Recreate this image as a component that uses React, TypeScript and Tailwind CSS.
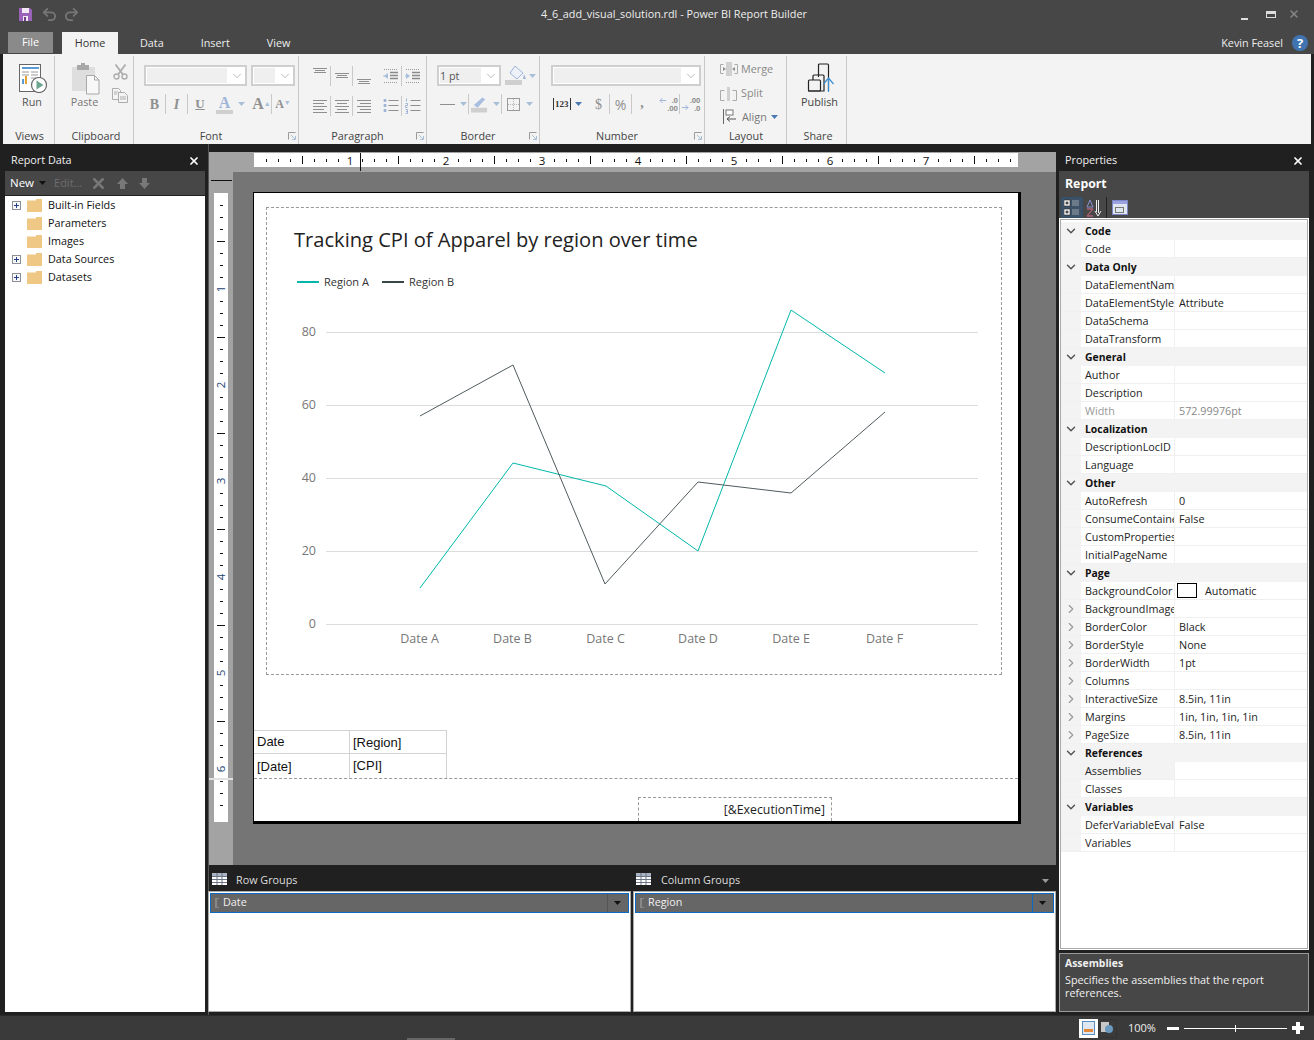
import type { ReactNode } from "react";
import { ChevronDown, ChevronRight, X, Undo2, Redo2 } from "lucide-react";

const ui = "font-['Open_Sans','Noto_Sans',sans-serif]";

const SaveIcon = () => (
  <svg width="13" height="13" viewBox="0 0 13 13">
    <path d="M0 0h11l2 2v11H0z" fill="#9a62b8" />
    <rect x="3" y="0" width="7" height="5" fill="#f2e9f6" />
    <rect x="4" y="8" width="5" height="5" fill="#f2e9f6" />
    <rect x="5" y="9" width="2" height="4" fill="#6c3f88" />
  </svg>
);

const RunIcon = () => (
  <svg width="30" height="30" viewBox="0 0 30 30">
    <rect x="1.5" y="1.5" width="21" height="27" fill="#fff" stroke="#666" />
    <path d="M4 5h17" stroke="#5b9bd5" strokeWidth="2" />
    <path d="M4 9h7M4 12h7M13 9h7M13 12h7M13 15h7" stroke="#9a9a9a" />
    <rect x="4" y="16" width="2" height="5" fill="#5b9bd5" />
    <rect x="7" y="13" width="2" height="8" fill="#e3a33b" />
    <circle cx="21" cy="22" r="7.5" fill="#fff" stroke="#666" strokeWidth="1.2" />
    <path d="M18.5 17.5l7 4.5-7 4.5z" fill="#6aa58c" />
  </svg>
);

const PasteIcon = () => (
  <svg width="30" height="32" viewBox="0 0 30 32">
    <rect x="1" y="4" width="23" height="24" rx="1" fill="#dedede" />
    <rect x="6" y="2" width="12" height="5" fill="#a8a8a8" />
    <rect x="10" y="0" width="4" height="3" fill="#a8a8a8" />
    <path d="M15.5 12.5h8l4.5 4.5v14h-12.500z" fill="#f8f8f8" stroke="#a8a8a8" />
    <path d="M23.500 12.500v4.500h4.500" fill="none" stroke="#a8a8a8" />
  </svg>
);

const ScissorsIcon = () => (
  <svg width="15" height="16" viewBox="0 0 15 16" fill="none" stroke="#adadad" strokeWidth="1.4">
    <circle cx="3.500" cy="12.500" r="2.500" />
    <circle cx="11.500" cy="12.500" r="2.500" />
    <path d="M2.500 0.500l7.500 10M12.500 0.500l-7.500 10" strokeWidth="1.800" />
  </svg>
);

const CopyIcon = () => (
  <svg width="16" height="15" viewBox="0 0 16 15" fill="#f4f4f4" stroke="#adadad">
    <path d="M0.500 0.500h6l2 2v9h-8z" />
    <path d="M6.500 4.500h6l3 3v7h-9z" />
    <path d="M2 4h4M2 6h3M8 9h6M8 11h6" />
  </svg>
);

// stacked text lines, used for the paragraph alignment icons
const Lines = ({ rows, color = "#8f8f8f" }: { rows: [number, number, number][]; color?: string }) => (
  <svg width="16" height="20" viewBox="0 0 16 20" stroke={color} strokeWidth="1">
    {rows.map(([a, b, y], i) => (
      <path key={i} d={`M${a} ${y + 0.5}H${b}`} />
    ))}
  </svg>
);

const IndentIcon = ({ right }: { right?: boolean }) => (
  <svg width="16" height="20" viewBox="0 0 16 20" strokeWidth="1">
    <path d="M1 3.500h14M1 16.500h14" stroke="#9a9a9a" strokeDasharray="1 1" />
    <path d="M7 6.500h8M7 9.500h8M7 12.500h8" stroke="#8a8a8a" strokeWidth="1.400" />
    <path d={right ? "M1 7l4 3-4 3z" : "M5 7l-4 3 4 3z"} fill="#a9bfe0" stroke="none" />
    <path d="M0 10h4" stroke="#a9bfe0" />
  </svg>
);

const BulletIcon = ({ numbered }: { numbered?: boolean }) => (
  <svg width="16" height="16" viewBox="0 0 16 16">
    <path d="M5.500 2.500h10M5.500 7.500h10M5.500 12.500h10" stroke="#8f8f8f" />
    {numbered ? (
      <path d="M1.500 0.500v3M0.500 5.500h2v2h-2v2h2M0.500 11.500h2v4h-2M1 13.500h1" stroke="#9fb5d8" fill="none" />
    ) : (
      <path d="M1 1.500h2v2H1zM1 6.500h2v2H1zM1 11.500h2v2H1z" fill="#9fb5d8" stroke="#9fb5d8" />
    )}
  </svg>
);

const Caret = ({ color = "#a9bfd8" }: { color?: string }) => (
  <svg width="8" height="4" viewBox="0 0 8 4" className="shrink-0">
    <path d="M0 0h7L3.500 4z" fill={color} />
  </svg>
);

const Launcher = () => (
  <svg width="8" height="8" viewBox="0 0 8 8" className="absolute right-[2px] bottom-[4px]" fill="none">
    <path d="M0.500 7.500v-7h7" stroke="#9a9a9a" />
    <path d="M3 3l4 4M4 7.500h3.500V4" stroke="#a9bfd8" />
  </svg>
);

const Group = ({ w, label, launcher, labelPad = "", children }: { w: string; label: string; launcher?: boolean; labelPad?: string; children?: ReactNode }) => (
  <div className={`${w} h-[88px] mt-[2px] border-r border-[#c9c9c9] flex flex-col relative`}>
    <div className="flex-1">{children}</div>
    <div className={`h-[15px] mb-[1px] text-center text-[10.800px] leading-[15px] text-[#444] ${launcher ? "pr-[10px]" : ""} ${labelPad}`}>{label}</div>
    {launcher && <Launcher />}
  </div>
);

const Combo = ({ w, fill, text }: { w: string; fill: string; text?: string }) => (
  <div className={`${w} h-[21px] border-2 border-[#cfcfcf] bg-white flex items-center pl-[1px] shrink-0`}>
    <div className={`${fill} h-[15px] bg-[#efefef] text-[10.800px] leading-[15px] text-[#555]`}>{text}</div>
    <ChevronDown size={14} strokeWidth={1} color="#8a8a8a" className="ml-auto mr-[1px]" />
  </div>
);

const Cell = ({ w = "w-[22px]", sep, children }: { w?: string; sep?: boolean; children: ReactNode }) => (
  <div className={`${w} h-[20px] flex items-center justify-center shrink-0 ${sep ? "border-r border-[#c9c9c9]" : ""}`}>{children}</div>
);

const Decimal = ({ top, bottom, right }: { top: string; bottom: string; right?: boolean }) => (
  <div className="flex items-center gap-[1px]">
    <svg width="7" height="7" viewBox="0 0 7 7" className={right ? "mt-[7px]" : "-mt-[7px]"}>
      <path d="M7 3.500H1M3.500 1L1 3.500 3.500 6" fill="none" stroke="#9fb5d8" transform={right ? "rotate(180 3.500 3.500)" : undefined} />
    </svg>
    <span className="text-[7.500px] leading-[8px] font-bold text-right">{top}<br />{bottom}</span>
  </div>
);

const Ribbon = () => (
  <div className={`mx-[3px] h-[90px] bg-[#f3f3f3] flex shrink-0 ${ui}`}>
    <Group w="w-[52px]" label="Views" labelPad="pl-[2px]">
      <div className="flex flex-col items-center pt-[7px] pl-[9px]">
        <RunIcon />
        <span className="text-[10.800px] leading-[15px] text-[#555] -ml-[2px] mt-[1px]">Run</span>
      </div>
    </Group>
    <Group w="w-[79px]" label="Clipboard" labelPad="pl-[4px]">
      <div className="flex pl-[16px] pt-[7px]">
        <div className="flex flex-col items-center">
          <PasteIcon />
          <span className="text-[10.800px] leading-[15px] text-[#777] -mt-[1px] -ml-[3px]">Paste</span>
        </div>
        <div className="flex flex-col items-center ml-[11px] gap-[8px] pt-[1px]">
          <ScissorsIcon />
          <CopyIcon />
        </div>
      </div>
    </Group>
    <Group w="w-[165px]" label="Font" launcher>
      <div className="pl-[10px] pt-[9px]">
        <div className="flex gap-[4px]">
          <Combo w="w-[103px]" fill="w-[80px]" />
          <Combo w="w-[44px]" fill="w-[21px]" />
        </div>
        <div className="flex items-center mt-[8px] text-[#8f8f8f]">
          <Cell sep><span className="font-['Liberation_Serif',serif] font-bold text-[14px]">B</span></Cell>
          <Cell sep><span className="font-['Liberation_Serif',serif] italic font-bold text-[14px]">I</span></Cell>
          <Cell w="w-[24px]"><span className="font-['Liberation_Serif',serif] font-bold text-[13px] underline">U</span></Cell>
          <div className="w-[32px] h-[20px] flex items-center gap-[5px] pl-[4px]">
            <div className="flex flex-col items-center w-[17px]">
              <span className="font-['Liberation_Serif',serif] font-bold text-[16px] leading-[15px] text-[#9fb5d8]">A</span>
              <div className="w-[17px] h-[4px] bg-[#cfcfcf]" />
            </div>
            <Caret />
          </div>
          <Cell w="w-[28px]" sep><span className="font-['Liberation_Serif',serif] font-bold text-[16px] ml-[8px]">A<sup className="text-[#a9bfd8] text-[7px]">▲</sup></span></Cell>
          <Cell><span className="font-['Liberation_Serif',serif] font-bold text-[12px]">A<sup className="text-[#a9bfd8] text-[7px]">▼</sup></span></Cell>
        </div>
      </div>
    </Group>
    <Group w="w-[128px]" label="Paragraph" launcher>
      <div className="pl-[10px] pt-[9px]">
        <div className="flex items-center h-[22px]">
          <Cell sep><Lines rows={[[1, 15, 2], [3, 13, 4], [2, 14, 6]]} /></Cell>
          <Cell sep><Lines rows={[[1, 15, 7], [3, 13, 9], [2, 14, 11]]} /></Cell>
          <Cell><Lines rows={[[1, 15, 13], [3, 13, 15], [2, 14, 17]]} /></Cell>
          <div className="w-[5px]" />
          <Cell sep><IndentIcon /></Cell>
          <Cell><IndentIcon right /></Cell>
        </div>
        <div className="flex items-center mt-[9px]">
          <Cell sep><Lines rows={[[1, 15, 4], [1, 12, 7], [1, 15, 10], [1, 12, 13], [1, 15, 16]]} /></Cell>
          <Cell sep><Lines rows={[[1, 15, 4], [3, 13, 7], [1, 15, 10], [3, 13, 13], [1, 15, 16]]} /></Cell>
          <Cell><Lines rows={[[1, 15, 4], [4, 15, 7], [1, 15, 10], [4, 15, 13], [1, 15, 16]]} /></Cell>
          <div className="w-[5px]" />
          <Cell sep><BulletIcon /></Cell>
          <Cell><BulletIcon numbered /></Cell>
        </div>
      </div>
    </Group>
    <Group w="w-[113px]" label="Border" launcher>
      <div className="pl-[10px] pt-[9px]">
        <div className="flex items-center">
          <Combo w="w-[64px]" fill="w-[41px]" text="1 pt" />
          <svg width="24" height="21" viewBox="0 0 24 21" className="ml-[4px]">
            <path d="M10 1l8 7-6 6-7-6z" fill="#eef2f8" stroke="#9fb5d8" />
            <path d="M19 9l2 5h-3z" fill="#9fb5d8" />
            <rect x="0" y="15" width="17" height="5" fill="#cfcfcf" />
          </svg>
          <Caret />
        </div>
        <div className="flex items-center mt-[8px]">
          <div className="w-[32px] h-[20px] flex items-center gap-[5px] border-r border-[#c9c9c9] shrink-0 pl-[3px]">
            <div className="w-[15px] h-[1px] bg-[#8f8f8f]" />
            <Caret />
          </div>
          <div className="w-[33px] h-[20px] flex items-center gap-[5px] border-r border-[#c9c9c9] shrink-0 pl-[2px]">
            <svg width="18" height="18" viewBox="0 0 18 18">
              <path d="M3 10l9-8 3 2-8 9z" fill="#a9bfe0" />
              <rect x="0" y="13" width="17" height="5" fill="#cfcfcf" />
            </svg>
            <Caret />
          </div>
          <div className="flex items-center gap-[6px] pl-[5px]">
            <svg width="13" height="13" viewBox="0 0 13 13" fill="none" stroke="#9a9a9a">
              <rect x="0.500" y="0.500" width="12" height="12" />
              <path d="M6.500 1v11M1 6.500h11" strokeDasharray="1 1" stroke="#b5b5b5" />
            </svg>
            <Caret />
          </div>
        </div>
      </div>
    </Group>
    <Group w="w-[165px]" label="Number" launcher>
      <div className="pl-[11px] pt-[9px]">
        <Combo w="w-[150px]" fill="w-[127px]" />
        <div className="flex items-center mt-[8px] text-[#8f8f8f]">
          <div className="w-[36px] h-[20px] flex items-center gap-[4px] pl-[2px] shrink-0">
            <span className="border-x border-[#333] text-[#333] font-['Liberation_Serif',serif] font-bold text-[9px] leading-[12px] px-[1px]">123</span>
            <Caret color="#4a78b0" />
          </div>
          <div className="w-[1px] shrink-0" />
          <Cell sep><span className="font-['Liberation_Serif',serif] text-[14px]">$</span></Cell>
          <Cell sep><span className="text-[14px]">%</span></Cell>
          <Cell w="w-[20px]"><span className="font-['Liberation_Serif',serif] font-bold text-[14px] -mt-[4px]">,</span></Cell>
          <div className="w-[6px] shrink-0" />
          <Cell sep><Decimal top=".0" bottom=".00" /></Cell>
          <Cell><Decimal top=".00" bottom=".0" right /></Cell>
        </div>
      </div>
    </Group>
    <Group w="w-[82px]" label="Layout" labelPad="pl-[1px]">
      <div className="flex flex-col pl-[15px] pt-[2px] gap-[3px] text-[10.800px] leading-[21px] text-[#8a8a8a]">
        <div className="flex items-center gap-[3px]">
          <svg width="18" height="14" viewBox="0 0 18 14">
            <rect x="6" y="0" width="6" height="14" fill="#d0d0d0" />
            <path d="M3.500 2.500h-3v9h3M14.500 2.500h3v9h-3" fill="none" stroke="#aaa" />
            <path d="M3 5l3 2-3 2zM15 5l-3 2 3 2z" fill="#8f8f8f" />
          </svg>
          Merge
        </div>
        <div className="flex items-center gap-[4px]">
          <svg width="17" height="16" viewBox="0 0 17 16">
            <rect x="7" y="2" width="3" height="14" fill="#d0d0d0" />
            <path d="M4.500 5.500h-4v10h4M12.500 5.500h4v10h-4" fill="none" stroke="#aaa" />
          </svg>
          Split
        </div>
        <div className="flex items-center gap-[4px] text-[#777]">
          <svg width="15" height="15" viewBox="0 0 15 15" className="ml-[3px] shrink-0">
            <path d="M0.500 0v15" stroke="#666" />
            <rect x="3" y="1" width="7" height="5" fill="#fff" stroke="#777" />
            <path d="M13 10H4M7 7.500L4 10l3 2.500" fill="none" stroke="#555" />
          </svg>
          Align
          <Caret color="#4a78b0" />
        </div>
      </div>
    </Group>
    <Group w="w-[60px]" label="Share" labelPad="pl-[3px]">
      <div className="flex flex-col items-center pt-[7px] pl-[11px]">
        <svg width="30" height="30" viewBox="0 0 30 30" fill="none">
          <path d="M11.500 14v-12a1 1 0 0 1 1-1h8a1 1 0 0 1 1 1v26" stroke="#222" strokeWidth="1.200" />
          <rect x="1.500" y="17" width="12" height="11" rx="1" stroke="#222" strokeWidth="1.200" />
          <path d="M6 17v-4a1 1 0 0 1 1-1h9a1 1 0 0 1 1 1v15H1" stroke="#222" strokeWidth="1.200" />
          <path d="M21.500 29V15M16.500 21l5-6 5 6" stroke="#3b8ecf" strokeWidth="1.200" />
        </svg>
        <span className="text-[10.800px] leading-[15px] text-[#444] mt-[1px] -ml-[5px]">Publish</span>
      </div>
    </Group>
  </div>
);

const FolderIcon = () => (
  <svg width="15" height="13" viewBox="0 0 15 13">
    <path d="M0 1.500h9V0h6v13H0z" fill="#eec884" />
  </svg>
);

const ReportData = () => (
  <div className={`w-[200px] ml-[5px] flex flex-col shrink-0 ${ui}`}>
    <div className="h-[27px] pt-[6px] flex items-center justify-between pl-[6px] pr-[5px] text-[10.800px] text-[#f0f0f0]">
      Report Data
      <X size={12} strokeWidth={3.500} color="#fff" />
    </div>
    <div className="h-[24px] bg-[#474747] flex items-center pl-[5px] text-[11.500px] text-white">
      New
      <div className="ml-[5px]"><Caret color="#111" /></div>
      <span className="ml-[7px] text-[#6e6e6e] text-[11px]">Edit...</span>
      <X size={17} strokeWidth={3.500} color="#777" className="ml-[8px]" />
      <svg width="11" height="11" viewBox="0 0 11 11" className="ml-[10px]"><path d="M5.500 0L11 6H8v5H3V6H0z" fill="#787878" /></svg>
      <svg width="11" height="11" viewBox="0 0 11 11" className="ml-[11px]"><path d="M5.500 11L11 5H8V0H3v5H0z" fill="#787878" /></svg>
    </div>
    <div className="flex-1 bg-white mb-[3px] mt-[1px] text-[10.800px] text-[#111]">
      {[
        ["Built-in Fields", true],
        ["Parameters", false],
        ["Images", false],
        ["Data Sources", true],
        ["Datasets", true],
      ].map(([name, plus]) => (
        <div key={name as string} className="h-[18px] flex items-center">
          <div className="w-[22px] pl-[7px]">
            {plus && (
              <svg width="9" height="9" viewBox="0 0 9 9">
                <rect x="0.500" y="0.500" width="8" height="8" fill="#f8f8f8" stroke="#8a8f98" />
                <path d="M2 4.500h5M4.500 2v5" stroke="#24408a" />
              </svg>
            )}
          </div>
          <FolderIcon />
          <span className="ml-[6px]">{name as string}</span>
        </div>
      ))}
    </div>
  </div>
);

const hTicks = Array.from({ length: 64 }, (_, i) => i);

const TopRuler = () => (
  <svg width="847" height="20" viewBox="209 152 847 20" className="block shrink-0">
    <rect x="209" y="152" width="847" height="20" fill="#a3a3a3" />
    <rect x="254" y="153" width="764" height="14" fill="#fff" />
    {hTicks.map((i) => {
      const x = 254 + i * 12;
      if (i % 8 === 0) return null;
      const tall = i % 4 === 0;
      return <rect key={i} x={x} y={tall ? 156 : 159} width="1" height={tall ? 8 : 3} fill="#111" />;
    })}
    {[1, 2, 3, 4, 5, 6, 7].map((n) => (
      <text key={n} x={254 + n * 96} y="164.500" textAnchor="middle" fontSize="11.500" fill="#111" fontFamily="Open Sans, sans-serif">{n}</text>
    ))}
    <rect x="360" y="153" width="1" height="18" fill="#111" />
  </svg>
);

const LeftRuler = () => (
  <svg width="24" height="693" viewBox="209 172 24 693" className="block shrink-0">
    <rect x="209" y="172" width="24" height="693" fill="#a3a3a3" />
    <rect x="211" y="180" width="21" height="1" fill="#111" />
    <rect x="214" y="193" width="14" height="629" fill="#fff" />
    {Array.from({ length: 52 }, (_, i) => i).map((i) => {
      const y = 193 + i * 12;
      if (i === 0 || i % 8 === 0) return null;
      const tall = i % 4 === 0;
      return <rect key={i} x={tall ? 217 : 220} y={y} width={tall ? 8 : 3} height="1" fill="#111" />;
    })}
    {[1, 2, 3, 4, 5, 6].map((n) => (
      <text key={n} transform={`translate(225 ${193 + n * 96}) rotate(-90)`} textAnchor="middle" fontSize="11.500" fill="#1b3f73" fontFamily="Open Sans, sans-serif">{n}</text>
    ))}
    <rect x="209" y="778" width="24" height="2" fill="#e2e2e2" />
  </svg>
);

const regionA = "420,588 513,463 606,486 698,551 791,310 885,373";
const regionB = "420,416 513,365 605,584 698,482 791,493 885,412";

const Chart = () => (
  <svg width="734" height="466" viewBox="267 208 734 466" className="block" fontFamily="Open Sans, sans-serif">
    <text x="294" y="247" fontSize="20.100" fill="#222">Tracking CPI of Apparel by region over time</text>
    <rect x="297" y="281" width="22" height="2" fill="#01b8aa" />
    <text x="324" y="286" fontSize="11" fill="#333">Region A</text>
    <rect x="382" y="281" width="22" height="2" fill="#374649" />
    <text x="409" y="286" fontSize="11" fill="#333">Region B</text>
    {[[80, 332], [60, 405], [40, 478], [20, 551], [0, 624]].map(([v, y]) => (
      <g key={v}>
        <rect x="326" y={y} width="652" height="1" fill="#dcdcdc" />
        <text x="316" y={y + 4} textAnchor="end" fontSize="12.500" fill="#777">{v}</text>
      </g>
    ))}
    {[["Date A", 419.5], ["Date B", 512.5], ["Date C", 605.5], ["Date D", 698], ["Date E", 791], ["Date F", 884.5]].map(([d, x]) => (
      <text key={d} x={x} y="643" textAnchor="middle" fontSize="12.500" fill="#777">{d}</text>
    ))}
    <polyline points={regionA} fill="none" stroke="#01b8aa" strokeWidth="1" />
    <polyline points={regionB} fill="none" stroke="#4f5b5e" strokeWidth="1" />
  </svg>
);

const tableCell = "border-r border-b border-[#d3d3d3] pl-[3px] font-['Liberation_Sans',Arial,sans-serif] text-[13px] leading-[22px] text-[#111]";

const Page = () => (
  <div className="ml-[20px] mt-[20px] w-[768px] h-[632px] bg-white border-t border-l border-r-[3px] border-b-[3px] border-black shrink-0">
    <div className="ml-[12px] mt-[14px] w-[736px] h-[468px] border border-dashed border-[#999]">
      <Chart />
    </div>
    <div className="mt-[55px] w-[193px] grid grid-cols-[96px_97px] border-t border-[#d3d3d3]">
      <div className={`${tableCell} h-[23px]`}>Date</div>
      <div className={`${tableCell} h-[23px] pt-[1px]`}>[Region]</div>
      <div className={`${tableCell} h-[24px] pt-[2px] !border-b-0`}>[Date]</div>
      <div className={`${tableCell} h-[24px] pt-[1px] !border-b-0`}>[CPI]</div>
    </div>
    <div className="border-t border-dashed border-[#999] h-[43px] pt-[18px]">
      <div className={`ml-[384px] w-[194px] h-[24px] border-t border-x border-dashed border-[#999] text-right pr-[6px] text-[12.300px] leading-[24px] text-[#222] ${ui}`}>
        [&amp;ExecutionTime]
      </div>
    </div>
  </div>
);

const TableIcon = () => (
  <svg width="15" height="12" viewBox="0 0 15 12">
    <rect width="15" height="12" fill="#fff" />
    <rect width="15" height="3" fill="#a9b4c4" />
    <path d="M5 0v12M10 0v12M0 3.500h15M0 6.500h15M0 9.500h15" stroke="#6a7484" strokeWidth="1" />
  </svg>
);

const GroupPane = ({ title, name, w, bright, caret }: { title: string; name: string; w: string; bright?: boolean; caret?: boolean }) => (
  <div className={`${w} flex flex-col shrink-0 ${ui}`}>
    <div className={`h-[26px] flex items-center pt-[5px] pr-[6px] text-[10.800px] text-[#ddd] ${caret ? "pl-[3px]" : "pl-[4px]"}`}>
      <div className="-mt-[3px]"><TableIcon /></div>
      <span className={caret ? "ml-[10px]" : "ml-[9px]"}>{title}</span>
      {caret && <div className="ml-auto"><Caret color="#9a9a9a" /></div>}
    </div>
    <div className="flex-1 bg-white border border-[#aaa] pt-[1px] px-[1px]">
      <div className="h-[20px] bg-[#666] border border-[#0a6cc0] flex items-center text-[10.800px] text-[#f0f0f0]">
        <span className="w-[4px] h-[10px] ml-[4px] border-l-2 border-y border-[#888]" />
        <span className="ml-[4px] -mt-[1px]">{name}</span>
        <div className={`ml-auto w-[21px] h-full flex items-center justify-center border-l ${bright ? "border-[#0a6cc0]" : "border-[#555]"}`}>
          <Caret color="#111" />
        </div>
      </div>
    </div>
  </div>
);

const Designer = () => (
  <div className="w-[848px] ml-[3px] pt-[8px] pb-[3px] flex flex-col shrink-0 border-l border-[#555]">
    <TopRuler />
    <div className="flex h-[693px] shrink-0">
      <LeftRuler />
      <div className="flex-1 bg-[#757575] overflow-hidden">
        <Page />
      </div>
    </div>
    <div className="flex-1 flex gap-[2px] -ml-[1px]">
      <GroupPane title="Row Groups" name="Date" w="w-[423px]" />
      <GroupPane title="Column Groups" name="Region" w="w-[423px]" bright caret />
    </div>
  </div>
);

type Prop = [string, string?, boolean?];
const sections: { name: string; closed?: boolean; props: Prop[] }[] = [
  { name: "Code", props: [["Code"]] },
  { name: "Data Only", props: [["DataElementName"], ["DataElementStyle", "Attribute"], ["DataSchema"], ["DataTransform"]] },
  { name: "General", props: [["Author"], ["Description"], ["Width", "572.99976pt", true]] },
  { name: "Localization", props: [["DescriptionLocID"], ["Language"]] },
  { name: "Other", props: [["AutoRefresh", "0"], ["ConsumeContainerWhitespace", "False"], ["CustomProperties"], ["InitialPageName"]] },
  { name: "Page", closed: true, props: [
    ["BackgroundColor", "Automatic"], ["BackgroundImage"], ["BorderColor", "Black"], ["BorderStyle", "None"], ["BorderWidth", "1pt"],
    ["Columns"], ["InteractiveSize", "8.5in, 11in"], ["Margins", "1in, 1in, 1in, 1in"], ["PageSize", "8.5in, 11in"],
  ] },
  { name: "References", props: [["Assemblies"], ["Classes"]] },
  { name: "Variables", props: [["DeferVariableEvaluation", "False"], ["Variables"]] },
];

const PropRow = ({ p, expandable }: { p: Prop; expandable: boolean }) => {
  const [name, value, muted] = p;
  const isColor = name === "BackgroundColor";
  return (
    <div className="h-[18px] flex border-b border-[#f0f0f0]">
      <div className="w-[20px] bg-[#f3f3f3] flex items-center justify-center shrink-0">
        {expandable && <ChevronRight size={14} strokeWidth={2} color="#999" />}
      </div>
      <div className={`w-[94px] pl-[4px] overflow-hidden whitespace-nowrap border-r border-[#f0f0f0] shrink-0 leading-[17px] ${muted ? "text-[#999]" : "text-[#222]"} ${name === "Assemblies" ? "bg-[#f3f3f3]" : ""}`}>
        {name}
      </div>
      <div className={`flex-1 flex items-center pl-[4px] whitespace-nowrap leading-[17px] ${muted ? "text-[#888]" : "text-[#222]"}`}>
        {isColor && <span className="w-[20px] h-[15px] border border-black mr-[8px] shrink-0 -ml-[2px]" />}
        {value}
      </div>
    </div>
  );
};

const Properties = () => (
  <div className={`w-[250px] ml-[3px] pb-[3px] flex flex-col shrink-0 ${ui}`}>
    <div className="h-[27px] pt-[6px] flex items-center justify-between pl-[6px] pr-[5px] text-[10.800px] text-[#f0f0f0]">
      Properties
      <X size={12} strokeWidth={3.500} color="#fff" />
    </div>
    <div className="h-[47px] bg-[#474747] flex flex-col pl-[2px]">
      <div className="h-[26px] pl-[4px] pt-[1px] flex items-center text-[12.300px] font-bold text-white">Report</div>
      <div className="flex items-center h-[21px]">
        <div className="w-[22px] h-[21px] bg-[#3d5266] border border-[#33506b] flex items-center justify-center">
          <svg width="16" height="17" viewBox="0 0 16 17">
            <rect x="0" y="1" width="6" height="6" fill="#eee" stroke="#222" strokeWidth="0.500" />
            <rect x="0" y="10" width="6" height="6" fill="#eee" stroke="#222" strokeWidth="0.500" />
            <path d="M1.500 4h3M3 2.500v3M1.500 13h3M3 11.500v3" stroke="#111" />
            <path d="M8 2h7M8 4h7M8 6h7M8 11h7M8 13h7M8 15h7" stroke="#9aa3ad" />
          </svg>
        </div>
        <div className="w-[24px] h-[21px] flex items-center justify-center border-r border-[#222]">
          <svg width="18" height="18" viewBox="0 0 18 18" fill="none">
            <path d="M4 1L1 8h6zM1 10h6L1 17h6" stroke="#8a8fd0" />
            <path d="M1 10h6L1 17h6" stroke="#c05050" />
            <path d="M12.500 1v13M10.500 1v12M9 12l3 5 3-5" stroke="#eee" />
          </svg>
        </div>
        <div className="ml-[5px] w-[16px] h-[15px] bg-[#dfe6f0] border border-[#7a86c8] flex flex-col">
          <div className="h-[3px] bg-[#9aa3e0]" />
          <div className="mt-[3px] ml-[2px] w-[9px] h-[6px] border border-[#777]" />
        </div>
      </div>
    </div>
    <div className="bg-white pt-[1px] px-[1px] pb-[1px]">
      <div className="h-[730px] border border-[#aaa] text-[10.800px]">
        <div className="pt-[2px]">
        {sections.map((s) => (
          <div key={s.name}>
            <div className="h-[18px] bg-[#f3f3f3] flex items-center font-bold text-[10.400px] text-[#111]">
              <div className="w-[20px] flex items-center justify-center shrink-0">
                <ChevronDown size={14} strokeWidth={2.500} color="#555" />
              </div>
              <span className="pl-[4px] pt-[1px]">{s.name}</span>
            </div>
            {s.props.map((p) => (
              <PropRow key={p[0]} p={p} expandable={!!s.closed && p[0] !== "BackgroundColor"} />
            ))}
          </div>
        ))}
        </div>
      </div>
    </div>
    <div className="flex-1 mt-[3px] bg-[#474747] border border-[#999] px-[5px] pt-[1px] text-[10.800px] leading-[13px] text-[#f0f0f0]">
      <div className="font-bold text-[10.400px] h-[17px] leading-[17px]">Assemblies</div>
      <div className="mt-[1px]">Specifies the assemblies that the report references.</div>
    </div>
  </div>
);

const StatusBar = () => (
  <div className={`h-[25px] bg-[#3a3a3a] border-t border-[#2a2a2a] flex items-center justify-end shrink-0 relative ${ui}`}>
    <div className="absolute left-[407px] bottom-0 w-[48px] h-[2px] bg-[#666]" />
    <div className="w-[19px] h-[19px] bg-white flex items-center justify-center">
      <svg width="13" height="14" viewBox="0 0 13 14">
        <rect x="0.500" y="0.500" width="12" height="13" fill="#dfe8f2" stroke="#5b8ec0" />
        <rect x="2" y="8" width="9" height="3" fill="#e2893b" />
      </svg>
    </div>
    <div className="w-[19px] h-[19px] border border-[#333] flex items-center justify-center mr-[11px]">
      <svg width="13" height="12" viewBox="0 0 13 12">
        <rect x="0" y="0" width="8" height="10" fill="#c8c8c8" />
        <circle cx="8" cy="7" r="4" fill="#6a9ac0" />
      </svg>
    </div>
    <span className="text-[11px] w-[27px] text-[#eee] mr-[12px]">100%</span>
    <div className="w-[12px] h-[3px] bg-white mr-[5px]" />
    <div className="w-[103px] h-[1px] bg-white relative mr-[5px]">
      <div className="absolute left-[51px] -top-[3px] w-[1px] h-[7px] bg-white" />
    </div>
    <svg width="12" height="12" viewBox="0 0 12 12" className="mr-[10px]"><path d="M4 0h4v4h4v4H8v4H4V8H0V4h4z" fill="#fff" /></svg>
  </div>
);

export default function App() {
  return (
    <div className="w-[1314px] h-[1040px] bg-[#202020] flex flex-col overflow-hidden">
      <div className="h-[30px] pb-[2px] bg-[#474747] flex items-center shrink-0">
        <div className="ml-[19px]"><SaveIcon /></div>
        <Undo2 size={17} strokeWidth={2.500} color="#777" className="ml-[9px]" />
        <Redo2 size={17} strokeWidth={2.500} color="#777" className="ml-[5px]" />
        <span className={`ml-[461px] text-[10.800px] text-[#eee] ${ui}`}>4_6_add_visual_solution.rdl - Power BI Report Builder</span>
        <div className="ml-auto flex items-center mr-[14px]">
          <div className="w-[7px] h-[2px] bg-[#ddd] mt-[10px]" />
          <div className="ml-[18px] w-[10px] h-[7px] border-t-[3px] border-b border-x border-[#ddd]" />
          <X size={12} strokeWidth={3} color="#888" className="ml-[12px]" />
        </div>
      </div>
      <div className={`h-[24px] bg-[#474747] flex items-end shrink-0 text-[10.800px] text-[#eee] ${ui}`}>
        <div className="ml-[8px] mb-[1px] w-[45px] h-[21px] bg-[#8a8a8a] text-white flex items-center justify-center">File</div>
        <div className="ml-[9px] w-[56px] h-[22px] bg-[#f3f3f3] text-[#333] flex items-center justify-center">Home</div>
        <span className="ml-[22px] mb-[3px]">Data</span>
        <span className="ml-[37px] mb-[3px]">Insert</span>
        <span className="ml-[37px] mb-[3px]">View</span>
        <span className="ml-auto mb-[3px]">Kevin Feasel</span>
        <div className="ml-[9px] mr-[6px] mb-[3px] w-[16px] h-[16px] rounded-full bg-[#3f74b0] text-white font-bold text-[13px] leading-[16px] text-center">?</div>
      </div>
      <Ribbon />
      <div className="flex h-[871px] shrink-0">
        <ReportData />
        <Designer />
        <Properties />
      </div>
      <StatusBar />
    </div>
  );
}
